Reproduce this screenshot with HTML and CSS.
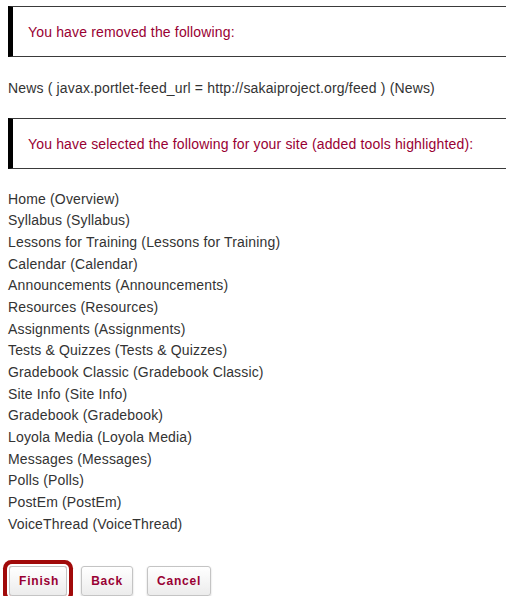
FILE: index.html
```html
<!DOCTYPE html>
<html>
<head>
<meta charset="utf-8">
<link rel="stylesheet" href="styles.css">
</head>
<body>
<div class="page">
  <div class="notice notice-first">You have removed the following:</div>
  <p class="removed">News ( javax.portlet-feed_url = http://sakaiproject.org/feed ) (News)</p>
  <div class="notice">You have selected the following for your site (added tools highlighted):</div>
  <ul class="tools">
    <li>Home (Overview)</li>
    <li>Syllabus (Syllabus)</li>
    <li>Lessons for Training (Lessons for Training)</li>
    <li>Calendar (Calendar)</li>
    <li>Announcements (Announcements)</li>
    <li>Resources (Resources)</li>
    <li>Assignments (Assignments)</li>
    <li>Tests &amp; Quizzes (Tests &amp; Quizzes)</li>
    <li>Gradebook Classic (Gradebook Classic)</li>
    <li>Site Info (Site Info)</li>
    <li>Gradebook (Gradebook)</li>
    <li>Loyola Media (Loyola Media)</li>
    <li>Messages (Messages)</li>
    <li>Polls (Polls)</li>
    <li>PostEm (PostEm)</li>
    <li>VoiceThread (VoiceThread)</li>
  </ul>
  <div class="actions">
    <button class="btn btn-focus" type="button">Finish</button>
    <button class="btn" type="button">Back</button>
    <button class="btn" type="button">Cancel</button>
  </div>
</div>
</body>
</html>
```
FILE: styles.css
```css
html, body {
  margin: 0;
  padding: 0;
  overflow: hidden;
  background: #fff;
}

body {
  font-family: "Liberation Sans", Arial, sans-serif;
  font-size: 14px;
  letter-spacing: 0.16px;
  color: #333;
}

.page {
  padding: 6px 0 0 8px;
}

.notice {
  border-top: 1px solid #3a3a3a;
  border-bottom: 1px solid #3a3a3a;
  border-left: 5px solid #000;
  padding: 17px 15px 16px 15px;
  line-height: 16px;
  color: #990033;
  background: #fff;
}

.removed {
  margin: 20.5px 0 19px 0;
  line-height: 21.67px;
}

.tools {
  list-style: none;
  margin: 19.5px 0 0 0;
  padding: 0;
  line-height: 21.67px;
}

.actions {
  display: flex;
  gap: 14px;
  margin: 30.8px 0 0 1px;
}

.btn {
  font-family: "Liberation Sans", Arial, sans-serif;
  font-size: 12px;
  font-weight: bold;
  letter-spacing: 0.8px;
  line-height: 14px;
  color: #990033;
  padding: 7px 9px;
  border: 1px solid #c4c4c4;
  border-radius: 3px;
  background: linear-gradient(#ffffff, #ececec);
  box-shadow: 0 1px 2px rgba(0, 0, 0, 0.2);
}

.btn-focus {
  box-shadow: 0 0 0 2px #fff, 0 0 0 6px #a10a0a;
  padding: 7px 7px 7px 9px;
}
```
